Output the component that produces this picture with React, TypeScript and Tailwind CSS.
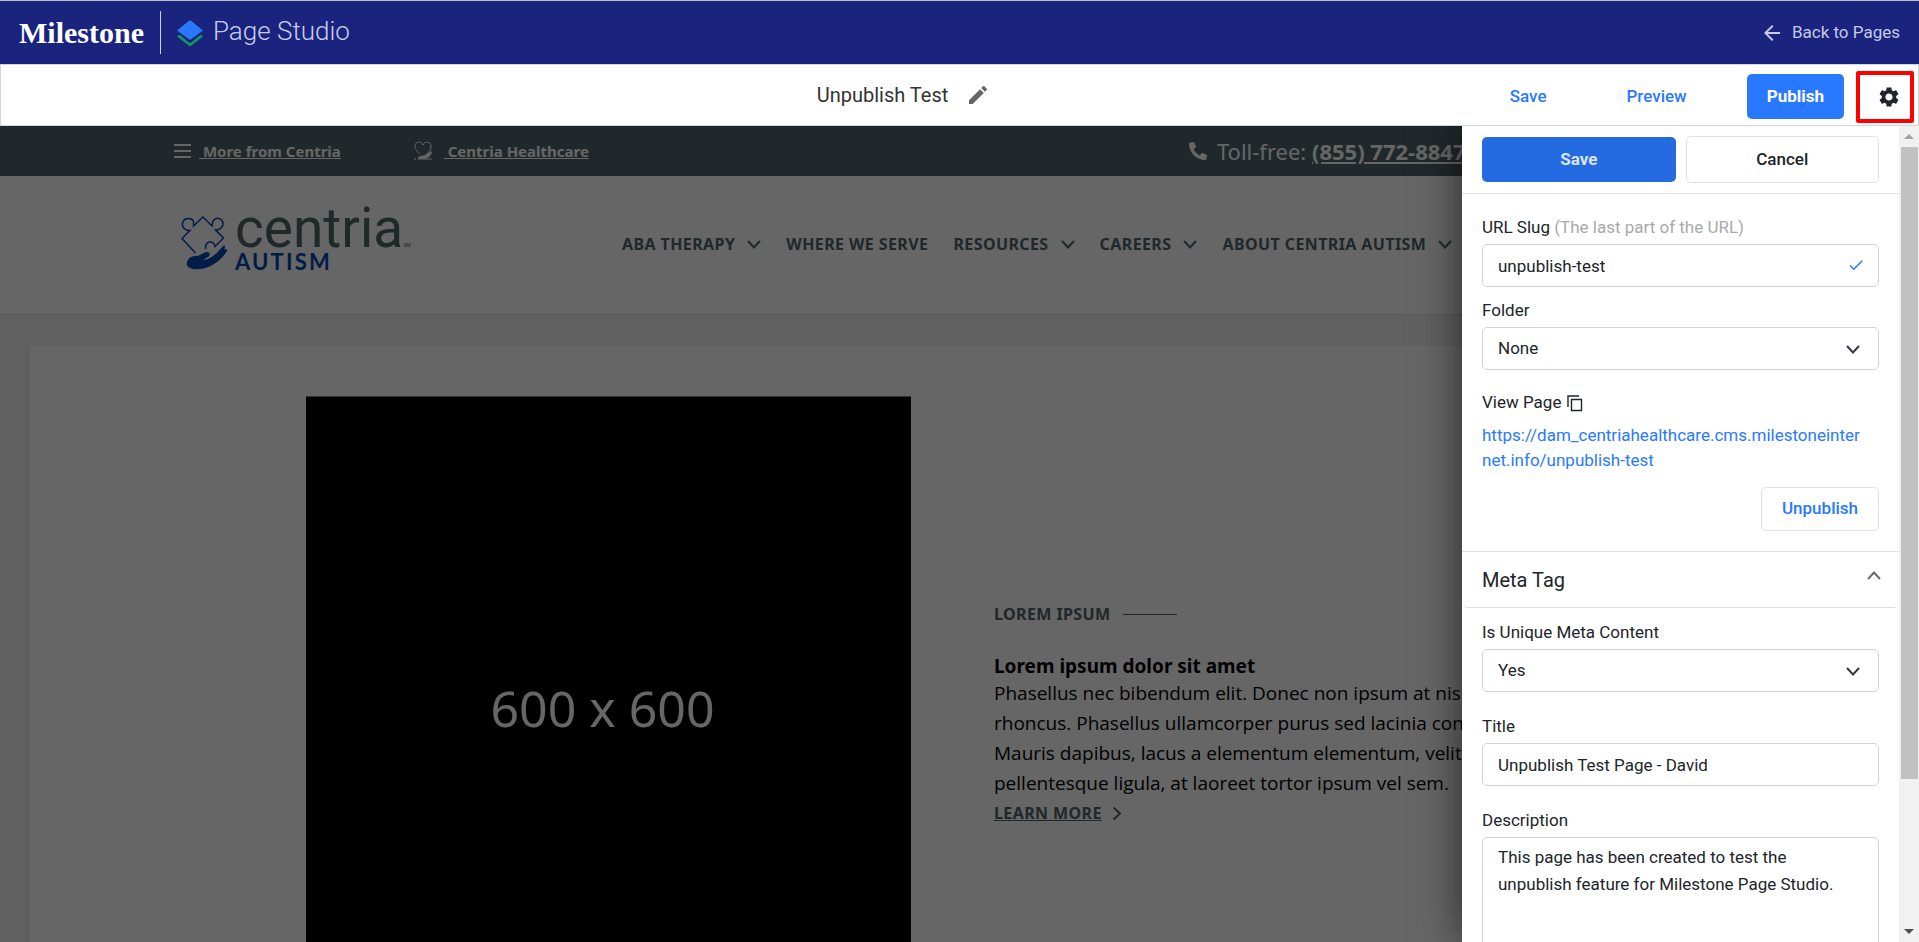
import React, { useState } from "react";
import { MdArrowBack, MdEdit, MdSettings, MdCheck } from "react-icons/md";
import { FaPhoneAlt } from "react-icons/fa";

const SITE_FONT = "font-['Noto_Sans','Open_Sans',sans-serif]";

function LayersLogo() {
  return (
    <svg viewBox="0 0 26 28" className="h-7 w-[26px]" aria-hidden="true">
      <path d="M13 1 26 11.5 13 21 0 11.5Z" fill="#2979ff" />
      <path d="M0 17.5 2.2 15.8 13 24.3 23.8 15.8 26 17.5 13 27.5Z" fill="#0f9d58" />
    </svg>
  );
}

function Chevron({ className }: { className: string }) {
  return (
    <svg viewBox="0 0 14 9" className={`shrink-0 ${className}`} fill="none" stroke="currentColor" strokeWidth="2" aria-hidden="true">
      <path d="M1 1l6 6.5L13 1" />
    </svg>
  );
}

function TopBar() {
  return (
    <header className="flex h-16 shrink-0 items-center border-t border-[#b9bdc6] bg-[#1a237e] px-[19px]">
      <span className="font-['Liberation_Serif',serif] text-[30px] leading-9 font-bold text-white">Milestone</span>
      <div className="ml-4 h-[43px] w-px bg-white/80" />
      <div className="ml-4 flex items-center gap-[10px]">
        <LayersLogo />
        <span className="pb-1 text-[26px] leading-8 font-light text-[#c9cdf0]">Page Studio</span>
      </div>
      <a href="#pages" className="ml-auto flex items-center gap-2 text-[17px] text-[#c5cae9]">
        <MdArrowBack className="size-6" />
        Back to Pages
      </a>
    </header>
  );
}

function Toolbar() {
  return (
    <div className="grid h-[62px] shrink-0 grid-cols-[1fr_auto_1fr] items-center border border-[#d3d6d8] bg-white">
      <div />
      <div className="flex items-center gap-[18px] pr-[112px]">
        <h1 className="text-[20px] text-[#333]">Unpublish Test</h1>
        <button type="button" aria-label="Rename page" className="text-[#666]">
          <MdEdit className="size-6" />
        </button>
      </div>
      <div className="flex items-center justify-end pt-[3px] pr-1 text-[17px] font-medium">
        <button type="button" className="px-4 text-[#2979ff]">Save</button>
        <button type="button" className="ml-12 px-4 text-[#2979ff]">Preview</button>
        <button type="button" className="ml-11 h-[45px] rounded-[5px] bg-[#2979ff] px-5 font-bold text-white">Publish</button>
        <button type="button" aria-label="Page settings" className="ml-3 flex h-[52px] w-[58px] items-center justify-end rounded-[2px] border-4 border-[#ff0000] pr-[9px] text-[#212529]">
          <MdSettings className="size-6" />
        </button>
      </div>
    </div>
  );
}

function CentriaLogo() {
  return (
    <div className="flex items-start gap-[5px] text-[#0046b2]">
      <svg viewBox="0 0 50 56" className="mt-[11px] h-14 w-[50px] shrink-0" aria-hidden="true">
        <path
          d="M15.5 38 2 23.5 10 15.5C4 15.5 1 11 3 6.5c2-4 9-4 10.500 0L13.500 11 23 2l9 9 1-5C35 2.500 40 2.500 42 5.500c2.500 4 0 9-6.500 9.500l8 8-8.500 8.500C34 25 25 25 25.500 34"
          fill="none"
          stroke="currentColor"
          strokeWidth="1.5"
        />
        <path d="M7 50C6 43 12 41 17 41c4-1 7-4 10-4 3 0 4 3 1 5l-5 3c8 0 15-8 20-14 3-2 2 2 1 4 2-2 3-1 3 1-5 8-15 17-27 18C13 55 8 53 7 50Z" fill="currentColor" />
      </svg>
      <div className="flex flex-col">
        <span className="font-['Roboto',sans-serif] text-[55px] leading-[48px] text-[#4b6764]">
          centria<span className="text-[5px] leading-none">SM</span>
        </span>
        <span className="font-['Lato',sans-serif] text-[22px] leading-5 font-bold tracking-widest">AUTISM</span>
      </div>
    </div>
  );
}

const NAV = [
  { label: "ABA THERAPY", menu: true },
  { label: "WHERE WE SERVE", menu: false },
  { label: "RESOURCES", menu: true },
  { label: "CAREERS", menu: true },
  { label: "ABOUT CENTRIA AUTISM", menu: true },
];

function SitePreview() {
  return (
    <div className={`relative h-full min-w-0 flex-1 overflow-hidden bg-[#f0f0f0] whitespace-nowrap ${SITE_FONT}`}>
      <div className="flex h-[50px] items-center bg-[#50646b] pl-[174px] text-[15px] font-bold text-white">
        <a href="#more" className="flex items-center gap-2">
          <svg viewBox="0 0 17 14" className="h-[14px] w-[17px] shrink-0" stroke="currentColor" strokeWidth="2" aria-hidden="true">
            <path d="M0 1h17M0 7h17M0 13h17" />
          </svg>
          <span className="whitespace-pre underline"> More from Centria</span>
        </a>
        <a href="#healthcare" className="ml-[73px] flex items-center gap-[11px]">
          <svg viewBox="0 0 19 20" className="h-5 w-[19px] shrink-0" fill="none" stroke="currentColor" aria-hidden="true">
            <path d="M6 13C2 10 1 7 1 5c0-5 7-5 8-1 1-4 8-4 8 1 0 3-1 5-4 8" />
            <path d="M4 18c0-4 5-3 7-4l7-4c0 4-4 8-8 8Z" fill="currentColor" stroke="none" />
            <path d="M0 18h2M4 18h14" />
          </svg>
          <span className="whitespace-pre underline"> Centria Healthcare</span>
        </a>
        <span className="ml-[600px] flex items-center gap-[10px] text-[22px] font-normal">
          <FaPhoneAlt className="size-[18px] shrink-0" />
          <span>
            Toll-free: <a href="tel:8557728847" className="font-bold underline">(855) 772-8847</a>
          </span>
        </span>
      </div>

      <div className="flex h-[139px] items-start border-b border-[#e0e0e0] bg-white pl-[180px]">
        <div className="w-[442px] shrink-0 pt-7">
          <CentriaLogo />
        </div>
        <nav className="flex gap-[25px] pt-14 text-[16px] leading-6 font-bold tracking-wide text-[#50646b]">
          {NAV.map((item) => (
            <a key={item.label} href="#nav" className="flex shrink-0 items-center gap-3">
              {item.label}
              {item.menu && <Chevron className="h-[9px] w-[14px]" />}
            </a>
          ))}
        </nav>
      </div>

      <main className="mt-[31px] ml-[30px] flex bg-white pt-[50px] pl-[276px]">
        <div className="flex h-[624px] w-[605px] shrink-0 items-center justify-center border-t border-[#808080] bg-black pr-3 text-[50px] text-white">600 x 600</div>
        <div className="ml-[83px] pt-[206px] text-[19px] leading-[30px] text-black">
          <p className="flex items-center gap-3 text-[16px] leading-6 font-bold tracking-wide text-[#50646b]">
            LOREM IPSUM
            <span className="h-px w-[54px] bg-[#50646b]" />
          </p>
          <h2 className="mt-7 leading-6 font-bold">Lorem ipsum dolor sit amet</h2>
          <p className="font-['Open_Sans',sans-serif]">
            Phasellus nec bibendum elit. Donec non ipsum at nisi
            <br />
            rhoncus. Phasellus ullamcorper purus sed lacinia cond
            <br />
            Mauris dapibus, lacus a elementum elementum, velit
            <br />
            pellentesque ligula, at laoreet tortor ipsum vel sem.
          </p>
          <a href="#learn" className="flex items-center gap-2 text-[16px] font-bold tracking-wide text-[#50646b]">
            <span className="underline">LEARN MORE</span>
            <Chevron className="h-[9px] w-[14px] -rotate-90" />
          </a>
        </div>
      </main>
      <div className="absolute inset-0 bg-black/60" />
    </div>
  );
}

const FIELD = "w-full rounded-[5px] border border-[#ced4da] bg-white px-[15px] text-[17px] text-[#212529] outline-none";

function SelectField({ id, label, options }: { id: string; label: string; options: string[] }) {
  return (
    <div>
      <label htmlFor={id} className="block leading-[34px]">{label}</label>
      <div className="relative">
        <select id={id} className={`h-[43px] appearance-none ${FIELD}`}>
          {options.map((o) => (
            <option key={o}>{o}</option>
          ))}
        </select>
        <Chevron className="pointer-events-none absolute top-[18px] right-[19px] h-[9px] w-[14px] text-[#343a40]" />
      </div>
    </div>
  );
}

function SettingsPanel() {
  const [slug, setSlug] = useState("unpublish-test");
  const [title, setTitle] = useState("Unpublish Test Page - David");
  const [description, setDescription] = useState("This page has been created to test the unpublish feature for Milestone Page Studio.");
  return (
    <aside className="relative z-10 flex shrink-0 shadow-[0_0_40px_rgba(0,0,0,0.6)]">
      <div className="w-[437px] overflow-hidden bg-white text-[17px] text-[#212529]">
        <div className="grid grid-cols-2 items-center gap-[10px] border-b border-[#dee2e6] px-5 py-[10px]">
          <button type="button" className="h-[45px] rounded-[5px] bg-[#246be1] font-bold text-[#dde5f5]">Save</button>
          <button type="button" className="h-[47px] rounded-[5px] border border-[#dee2e6] font-medium">Cancel</button>
        </div>

        <div className="flex flex-col border-b border-[#dee2e6] px-5 pt-4 pb-5">
          <label htmlFor="slug" className="block leading-[34px]">
            URL Slug <span className="text-[#a9a9a9]">(The last part of the URL)</span>
          </label>
          <div className="relative mb-[6px]">
            <input id="slug" value={slug} onChange={(e) => setSlug(e.target.value)} className={`h-[43px] ${FIELD}`} />
            <MdCheck className="absolute top-3 right-[14px] size-[18px] text-[#2979ff]" />
          </div>
          <SelectField id="folder" label="Folder" options={["None"]} />
          <div className="mt-[17px] flex h-8 items-center gap-[6px]">
            View Page
            <button type="button" aria-label="Copy link">
              <svg viewBox="0 0 16 17" className="h-[17px] w-4" fill="none" stroke="currentColor" strokeWidth="1.4" aria-hidden="true">
                <path d="M4.5 4.5h10v11h-10zM1 12V1h11" />
              </svg>
            </button>
          </div>
          <a href="https://dam_centriahealthcare.cms.milestoneinternet.info/unpublish-test" className="mt-1 pr-3 leading-[25px] break-all text-[#2979ff]">
            https://dam_centriahealthcare.cms.milestoneinternet.info/unpublish-test
          </a>
          <button type="button" className="mt-[14px] h-11 self-end rounded-[5px] border border-[#dee2e6] px-5 font-medium text-[#2979ff]">
            Unpublish
          </button>
        </div>

        <button type="button" className="flex h-14 w-full items-center justify-between rounded-b-[5px] border-b border-[#dee2e6] pr-[18px] pl-5 text-[20px]">
          Meta Tag
          <Chevron className="mb-2 h-[9px] w-[14px] rotate-180 text-[#6c6c6c]" />
        </button>

        <div className="flex flex-col gap-[17px] px-5 pt-[7px]">
          <SelectField id="unique" label="Is Unique Meta Content" options={["Yes", "No"]} />
          <div>
            <label htmlFor="title" className="block leading-[34px]">Title</label>
            <input id="title" value={title} onChange={(e) => setTitle(e.target.value)} className={`h-[43px] ${FIELD}`} />
          </div>
          <div>
            <label htmlFor="description" className="block leading-[34px]">Description</label>
            <textarea
              id="description"
              rows={6}
              value={description}
              onChange={(e) => setDescription(e.target.value)}
              className={`block resize-none py-[6px] leading-[27px] ${FIELD}`}
            />
          </div>
        </div>
      </div>

      <div className="flex w-5 flex-col items-center bg-[#f1f1f1] py-2">
        <svg viewBox="0 0 10 5" className="h-[5px] w-[10px] shrink-0" fill="#a3a3a3" aria-hidden="true">
          <path d="M0 5 5 0l5 5Z" />
        </svg>
        <div className="mt-2 h-[79%] w-[17px] bg-[#c1c1c1]" />
        <svg viewBox="0 0 10 5" className="mt-auto h-[5px] w-[10px] shrink-0" fill="#505050" aria-hidden="true">
          <path d="M0 0 5 5l5-5Z" />
        </svg>
      </div>
    </aside>
  );
}

export default function App() {
  return (
    <div className="flex h-screen flex-col overflow-hidden bg-white font-['Roboto',sans-serif]">
      <TopBar />
      <Toolbar />
      <div className="flex min-h-0 flex-1 overflow-hidden">
        <SitePreview />
        <SettingsPanel />
      </div>
    </div>
  );
}
